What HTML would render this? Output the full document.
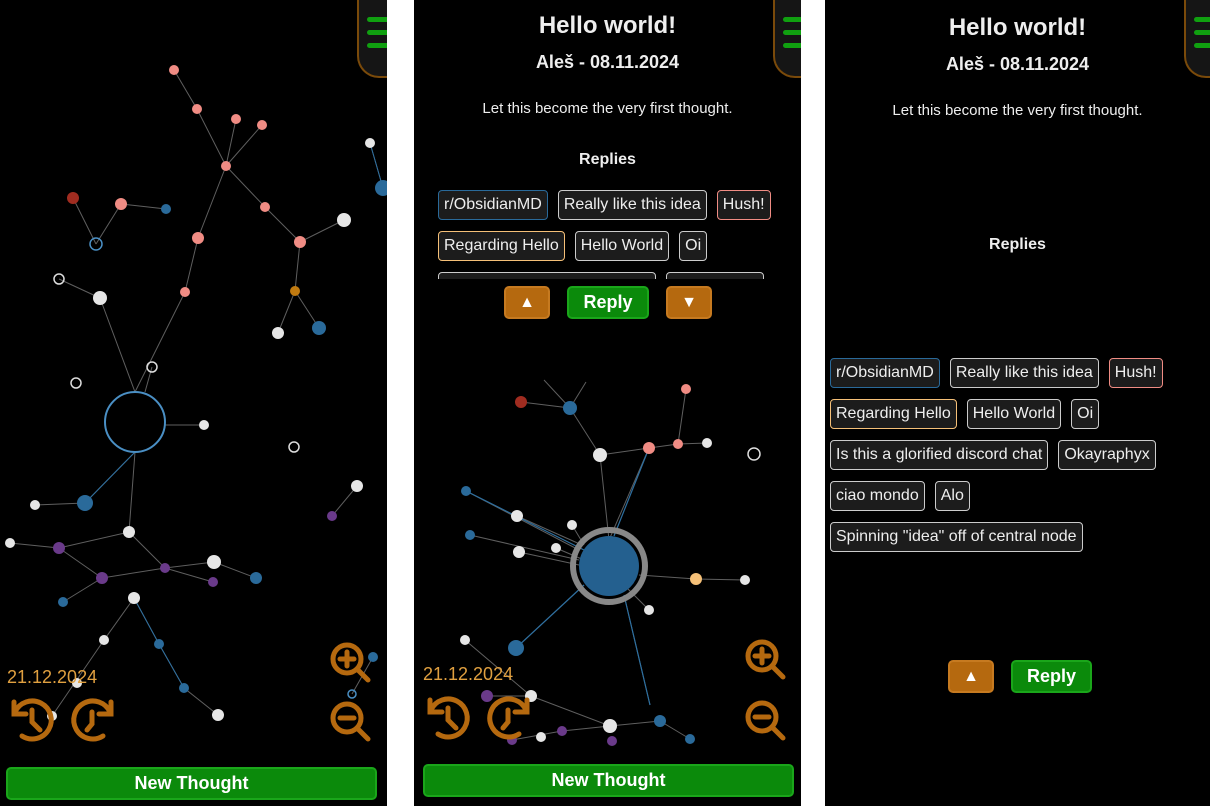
<!DOCTYPE html>
<html><head><meta charset="utf-8"><style>
*{box-sizing:border-box;margin:0;padding:0}
body{width:1210px;height:806px;background:#fff;position:relative;overflow:hidden;font-family:"Liberation Sans","DejaVu Sans",sans-serif;color:#eee}
.p{position:absolute;top:0;height:806px;background:#000;overflow:hidden}
.ham{position:absolute;top:-2px;width:40px;height:80px;border:2px solid #7a4a0a;border-top:none;border-right:none;border-radius:0 0 0 22px;background:#151515}
.ham i{position:absolute;left:8px;width:30px;height:5px;background:#10a010;border-radius:3px}
.t{position:absolute;left:0;right:0;text-align:center}
h1{font-size:24px;font-weight:bold}
.chips{position:absolute;display:flex;flex-wrap:wrap;gap:11px 10px}
.c{height:30px;line-height:28px;padding:0 5px;border:1px solid #ccc;border-radius:4px;background:#1c1c1c;font-size:16px;color:#eee;white-space:nowrap}
.btn{position:absolute;border-radius:5px;text-align:center;color:#fff;font-weight:bold}
.or{background:#b5690f;border:2px solid #c67a20;font-size:16px}
.gr{background:#0b8a0b;border:2px solid #1aa61a;font-size:18px}
.date{position:absolute;color:#e0a040;font-size:18px}
</style></head><body>

<!-- Panel 1 -->
<div class="p" style="left:0;width:387px">
<svg width="387" height="806" style="position:absolute;left:0;top:0">
<g stroke="#888" stroke-width="1" fill="none" opacity=".7">
<path d="M174 70 L197 109 L226 166 L236 119 M226 166 L262 125 M226 166 L198 238 L185 292 L135 392 M226 166 L265 207 L300 242 L344 220 M300 242 L295 291 L278 333 M295 291 L319 328 M121 204 L166 209 M73 198 L96 244 M121 204 L96 244 M100 298 L59 279 M100 298 L135 392 M152 367 L145 392 M165 425 L204 425 M370 143 L383 188 M135 452 L85 503 L35 505 M135 452 L129 532 L165 568 L214 562 L256 578 M129 532 L59 548 L10 543 M59 548 L102 578 L165 568 L213 582 M102 578 L63 602 M134 598 L104 640 L52 716 M134 598 L159 644 L184 688 L218 715 M357 486 L332 516 M373 657 L352 694"/>
</g>
<g stroke="#2d6fa0" fill="none"><path d="M135 452 L85 503 M134 598 L159 644 L184 688 M370 143 L383 188" stroke-width="1"/></g>
<circle cx="135" cy="422" r="30" fill="none" stroke="#4a8fc4" stroke-width="2"/>
<g fill="#f08c84"><circle cx="174" cy="70" r="5"/><circle cx="197" cy="109" r="5"/><circle cx="236" cy="119" r="5"/><circle cx="262" cy="125" r="5"/><circle cx="226" cy="166" r="5"/><circle cx="121" cy="204" r="6"/><circle cx="198" cy="238" r="6"/><circle cx="265" cy="207" r="5"/><circle cx="300" cy="242" r="6"/><circle cx="185" cy="292" r="5"/></g>
<circle cx="73" cy="198" r="6" fill="#a02c20"/>
<circle cx="295" cy="291" r="5" fill="#c07a10"/>
<g fill="#2a6a9a"><circle cx="166" cy="209" r="5"/><circle cx="319" cy="328" r="7"/><circle cx="383" cy="188" r="8"/><circle cx="85" cy="503" r="8"/><circle cx="256" cy="578" r="6"/><circle cx="63" cy="602" r="5"/><circle cx="159" cy="644" r="5"/><circle cx="184" cy="688" r="5"/><circle cx="373" cy="657" r="5"/></g>
<g fill="#e6e6e6"><circle cx="100" cy="298" r="7"/><circle cx="344" cy="220" r="7"/><circle cx="370" cy="143" r="5"/><circle cx="278" cy="333" r="6"/><circle cx="204" cy="425" r="5"/><circle cx="35" cy="505" r="5"/><circle cx="129" cy="532" r="6"/><circle cx="214" cy="562" r="7"/><circle cx="10" cy="543" r="5"/><circle cx="134" cy="598" r="6"/><circle cx="104" cy="640" r="5"/><circle cx="218" cy="715" r="6"/><circle cx="357" cy="486" r="6"/><circle cx="77" cy="683" r="5"/><circle cx="52" cy="716" r="5"/></g>
<g fill="none" stroke-width="1.5"><circle cx="96" cy="244" r="6" stroke="#4a8fc4"/><circle cx="59" cy="279" r="5" stroke="#ddd"/><circle cx="76" cy="383" r="5" stroke="#ddd"/><circle cx="152" cy="367" r="5" stroke="#ddd"/><circle cx="294" cy="447" r="5" stroke="#ddd"/><circle cx="352" cy="694" r="4" stroke="#4a8fc4"/></g>
<g fill="#6a3a8a"><circle cx="59" cy="548" r="6"/><circle cx="102" cy="578" r="6"/><circle cx="165" cy="568" r="5"/><circle cx="213" cy="582" r="5"/><circle cx="332" cy="516" r="5"/></g>
<g fill="none" stroke="#b5690f" stroke-width="5" stroke-linecap="round">
<circle cx="347" cy="659" r="14"/><path d="M357 669 L368 680 M340 659 H354 M347 652 V666"/>
<circle cx="347" cy="718" r="14"/><path d="M357 728 L368 739 M340 718 H354"/>
<path d="M15 712 A19 19 0 1 1 22 736"/><path d="M14 702 V714 H26"/><path d="M32 710 V722 L40 730"/>
<path d="M110 712 A19 19 0 1 0 103 736"/><path d="M111 702 V714 H99"/><path d="M92 712 V724 L87 730"/>
</g>
</svg>
<div class="date" style="left:7px;top:667px">21.12.2024</div>
<div class="ham" style="left:357px"><i style="top:19px"></i><i style="top:32px"></i><i style="top:45px"></i></div>
<div class="btn gr" style="left:6px;top:767px;width:371px;height:33px;line-height:29px">New Thought</div>
</div>

<!-- Panel 2 -->
<div class="p" style="left:414px;width:387px">
<svg width="387" height="806" style="position:absolute;left:0;top:0">
<g stroke="#888" stroke-width="1" fill="none" opacity=".7">
<path d="M107 402 L156 408 M156 408 L130 380 M156 408 L172 382 M156 408 L186 455 L195 540 M186 455 L235 448 L264 444 L293 443 M272 389 L264 444 M235 448 L195 540 M52 491 L165 550 M56 535 L165 560 M103 516 L168 545 M105 552 L165 565 M142 548 L170 560 M158 525 L170 545 M235 610 L210 585 M225 575 L282 579 L331 580 M102 648 L170 585 M51 640 L117 696 M73 696 L117 696 M117 696 L196 726 L246 721 L276 739 M148 731 L196 726 M98 740 L148 731 M210 595 L236 705"/>
</g>
<g stroke="#2d6fa0" stroke-width="1.2" fill="none"><path d="M102 648 L170 585 M210 595 L236 705 M235 448 L200 536 M52 491 L170 550"/></g>
<circle cx="195" cy="566" r="36" fill="none" stroke="#888" stroke-width="6"/>
<circle cx="195" cy="566" r="30" fill="#24608f"/>
<circle cx="107" cy="402" r="6" fill="#a02c20"/>
<g fill="#2a6a9a"><circle cx="156" cy="408" r="7"/><circle cx="52" cy="491" r="5"/><circle cx="56" cy="535" r="5"/><circle cx="102" cy="648" r="8"/><circle cx="246" cy="721" r="6"/><circle cx="276" cy="739" r="5"/></g>
<g fill="#f08c84"><circle cx="272" cy="389" r="5"/><circle cx="235" cy="448" r="6"/><circle cx="264" cy="444" r="5"/></g>
<g fill="#e6e6e6"><circle cx="186" cy="455" r="7"/><circle cx="293" cy="443" r="5"/><circle cx="103" cy="516" r="6"/><circle cx="105" cy="552" r="6"/><circle cx="142" cy="548" r="5"/><circle cx="158" cy="525" r="5"/><circle cx="235" cy="610" r="5"/><circle cx="331" cy="580" r="5"/><circle cx="51" cy="640" r="5"/><circle cx="117" cy="696" r="6"/><circle cx="196" cy="726" r="7"/><circle cx="127" cy="737" r="5"/></g>
<circle cx="340" cy="454" r="6" fill="none" stroke="#ddd" stroke-width="1.5"/>
<circle cx="282" cy="579" r="6" fill="#f5c078"/>
<g fill="#6a3a8a"><circle cx="73" cy="696" r="6"/><circle cx="148" cy="731" r="5"/><circle cx="198" cy="741" r="5"/><circle cx="98" cy="740" r="5"/></g>
<g fill="none" stroke="#b5690f" stroke-width="5" stroke-linecap="round">
<circle cx="348" cy="656" r="14"/><path d="M358 666 L369 677 M341 656 H355 M348 649 V663"/>
<circle cx="348" cy="717" r="14"/><path d="M358 727 L369 738 M341 717 H355"/>
<path d="M17 710 A19 19 0 1 1 24 734"/><path d="M16 700 V712 H28"/><path d="M34 708 V720 L42 728"/>
<path d="M112 710 A19 19 0 1 0 105 734"/><path d="M113 700 V712 H101"/><path d="M94 710 V722 L89 728"/>
</g>
</svg>
<div style="position:absolute;left:0;top:0;width:387px;height:330px;background:#000"></div>
<div class="t" style="top:12px"><h1>Hello world!</h1></div>
<div class="t" style="top:52px;font-size:18px;font-weight:bold">Aleš - 08.11.2024</div>
<div class="t" style="top:100px;font-size:15px">Let this become the very first thought.</div>
<div class="t" style="top:151px;font-size:16px;font-weight:bold">Replies</div>
<div style="position:absolute;left:24px;top:190px;width:340px;height:89px;overflow:hidden">
<div class="chips" style="left:0;top:0;width:340px">
<span class="c" style="border-color:#2a6a9a">r/ObsidianMD</span><span class="c">Really like this idea</span><span class="c" style="border-color:#f08c84">Hush!</span>
<span class="c" style="border-color:#f5c078">Regarding Hello</span><span class="c">Hello World</span><span class="c">Oi</span>
<span class="c">Is this a glorified discord chat</span><span class="c">Okayraphyx</span>
</div></div>
<div class="btn or" style="left:90px;top:286px;width:46px;height:33px;line-height:29px">▲</div>
<div class="btn gr" style="left:153px;top:286px;width:82px;height:33px;line-height:29px">Reply</div>
<div class="btn or" style="left:252px;top:286px;width:46px;height:33px;line-height:29px">▼</div>
<div class="date" style="left:9px;top:664px">21.12.2024</div>
<div class="ham" style="left:359px"><i style="top:19px"></i><i style="top:32px"></i><i style="top:45px"></i></div>
<div class="btn gr" style="left:9px;top:764px;width:371px;height:33px;line-height:29px">New Thought</div>
</div>

<!-- Panel 3 -->
<div class="p" style="left:825px;width:385px">
<div class="t" style="top:14px"><h1>Hello world!</h1></div>
<div class="t" style="top:54px;font-size:18px;font-weight:bold">Aleš - 08.11.2024</div>
<div class="t" style="top:102px;font-size:15px">Let this become the very first thought.</div>
<div class="t" style="top:236px;font-size:16px;font-weight:bold">Replies</div>
<div class="chips" style="left:5px;top:358px;width:360px">
<span class="c" style="border-color:#2a6a9a">r/ObsidianMD</span><span class="c">Really like this idea</span><span class="c" style="border-color:#f08c84">Hush!</span>
<span class="c" style="border-color:#f5c078">Regarding Hello</span><span class="c">Hello World</span><span class="c">Oi</span>
<span class="c">Is this a glorified discord chat</span><span class="c">Okayraphyx</span>
<span class="c">ciao mondo</span><span class="c">Alo</span>
<span class="c">Spinning "idea" off of central node</span>
</div>
<div class="btn or" style="left:123px;top:660px;width:46px;height:33px;line-height:29px">▲</div>
<div class="btn gr" style="left:186px;top:660px;width:81px;height:33px;line-height:29px">Reply</div>
<div class="ham" style="left:359px"><i style="top:19px"></i><i style="top:32px"></i><i style="top:45px"></i></div>
</div>
</body></html>
